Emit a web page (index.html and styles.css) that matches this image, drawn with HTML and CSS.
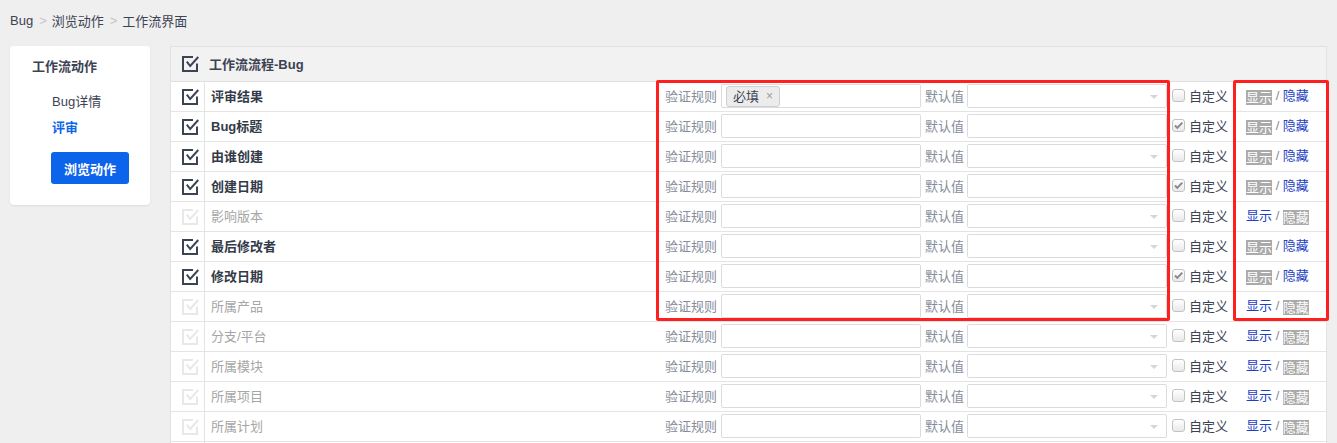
FILE: index.html
```html
<!DOCTYPE html>
<html lang="zh-CN">
<head>
<meta charset="utf-8">
<title>工作流界面</title>
<link rel="stylesheet" href="styles.css">
</head>
<body>
<div class="crumbs"><span>Bug</span><span class="sep">&gt;</span><span>浏览动作</span><span class="sep">&gt;</span><span>工作流界面</span></div>
<div class="main">
  <aside class="side">
    <div class="side-title">工作流动作</div>
    <div class="side-item">Bug详情</div>
    <div class="side-item active">评审</div>
    <button class="btn">浏览动作</button>
  </aside>
  <section class="panel">
    <div class="phead">
      <svg class="ic" width="17" height="16" viewBox="0 0 17 16"><path d="M11 1H1v14h14V7.5" fill="none" stroke="currentColor" stroke-width="2"/><path d="M4.8 5.6l3.4 4.4L16.3 1" fill="none" stroke="currentColor" stroke-width="2"/></svg>
      <span class="ptitle">工作流流程-Bug</span>
    </div>

    <div class="row">
      <div class="ck"><svg class="ic" width="17" height="16" viewBox="0 0 17 16"><path d="M11 1H1v14h14V7.5" fill="none" stroke="currentColor" stroke-width="2"/><path d="M4.8 5.6l3.4 4.4L16.3 1" fill="none" stroke="currentColor" stroke-width="2"/></svg></div>
      <div class="name">评审结果</div>
      <div class="lbl">验证规则</div>
      <div class="field"><span class="tag">必填<i>×</i></span></div>
      <div class="lbl2">默认值</div>
      <div class="field sel"></div>
      <div class="cust"><span class="cb"></span>自定义</div>
      <div class="acts"><span class="cur">显示</span> / <a class="lnk">隐藏</a></div>
    </div>

    <div class="row">
      <div class="ck"><svg class="ic" width="17" height="16" viewBox="0 0 17 16"><path d="M11 1H1v14h14V7.5" fill="none" stroke="currentColor" stroke-width="2"/><path d="M4.8 5.6l3.4 4.4L16.3 1" fill="none" stroke="currentColor" stroke-width="2"/></svg></div>
      <div class="name">Bug标题</div>
      <div class="lbl">验证规则</div>
      <div class="field"></div>
      <div class="lbl2">默认值</div>
      <div class="field"></div>
      <div class="cust"><span class="cb checked"><svg width="11" height="11" viewBox="0 0 11 11"><path d="M2 5.5l2.3 2.4L9.3 2.6" fill="none" stroke="#8a8a8a" stroke-width="2"/></svg></span>自定义</div>
      <div class="acts"><span class="cur">显示</span> / <a class="lnk">隐藏</a></div>
    </div>

    <div class="row">
      <div class="ck"><svg class="ic" width="17" height="16" viewBox="0 0 17 16"><path d="M11 1H1v14h14V7.5" fill="none" stroke="currentColor" stroke-width="2"/><path d="M4.8 5.6l3.4 4.4L16.3 1" fill="none" stroke="currentColor" stroke-width="2"/></svg></div>
      <div class="name">由谁创建</div>
      <div class="lbl">验证规则</div>
      <div class="field"></div>
      <div class="lbl2">默认值</div>
      <div class="field sel"></div>
      <div class="cust"><span class="cb"></span>自定义</div>
      <div class="acts"><span class="cur">显示</span> / <a class="lnk">隐藏</a></div>
    </div>

    <div class="row">
      <div class="ck"><svg class="ic" width="17" height="16" viewBox="0 0 17 16"><path d="M11 1H1v14h14V7.5" fill="none" stroke="currentColor" stroke-width="2"/><path d="M4.8 5.6l3.4 4.4L16.3 1" fill="none" stroke="currentColor" stroke-width="2"/></svg></div>
      <div class="name">创建日期</div>
      <div class="lbl">验证规则</div>
      <div class="field"></div>
      <div class="lbl2">默认值</div>
      <div class="field"></div>
      <div class="cust"><span class="cb checked"><svg width="11" height="11" viewBox="0 0 11 11"><path d="M2 5.5l2.3 2.4L9.3 2.6" fill="none" stroke="#8a8a8a" stroke-width="2"/></svg></span>自定义</div>
      <div class="acts"><span class="cur">显示</span> / <a class="lnk">隐藏</a></div>
    </div>

    <div class="row off">
      <div class="ck"><svg class="ic" width="17" height="16" viewBox="0 0 17 16"><path d="M11 1H1v14h14V7.5" fill="none" stroke="currentColor" stroke-width="2"/><path d="M4.8 5.6l3.4 4.4L16.3 1" fill="none" stroke="currentColor" stroke-width="2"/></svg></div>
      <div class="name">影响版本</div>
      <div class="lbl">验证规则</div>
      <div class="field"></div>
      <div class="lbl2">默认值</div>
      <div class="field sel"></div>
      <div class="cust"><span class="cb"></span>自定义</div>
      <div class="acts"><a class="lnk">显示</a> / <span class="cur">隐藏</span></div>
    </div>

    <div class="row">
      <div class="ck"><svg class="ic" width="17" height="16" viewBox="0 0 17 16"><path d="M11 1H1v14h14V7.5" fill="none" stroke="currentColor" stroke-width="2"/><path d="M4.8 5.6l3.4 4.4L16.3 1" fill="none" stroke="currentColor" stroke-width="2"/></svg></div>
      <div class="name">最后修改者</div>
      <div class="lbl">验证规则</div>
      <div class="field"></div>
      <div class="lbl2">默认值</div>
      <div class="field sel"></div>
      <div class="cust"><span class="cb"></span>自定义</div>
      <div class="acts"><span class="cur">显示</span> / <a class="lnk">隐藏</a></div>
    </div>

    <div class="row">
      <div class="ck"><svg class="ic" width="17" height="16" viewBox="0 0 17 16"><path d="M11 1H1v14h14V7.5" fill="none" stroke="currentColor" stroke-width="2"/><path d="M4.8 5.6l3.4 4.4L16.3 1" fill="none" stroke="currentColor" stroke-width="2"/></svg></div>
      <div class="name">修改日期</div>
      <div class="lbl">验证规则</div>
      <div class="field"></div>
      <div class="lbl2">默认值</div>
      <div class="field"></div>
      <div class="cust"><span class="cb checked"><svg width="11" height="11" viewBox="0 0 11 11"><path d="M2 5.5l2.3 2.4L9.3 2.6" fill="none" stroke="#8a8a8a" stroke-width="2"/></svg></span>自定义</div>
      <div class="acts"><span class="cur">显示</span> / <a class="lnk">隐藏</a></div>
    </div>

    <div class="row off">
      <div class="ck"><svg class="ic" width="17" height="16" viewBox="0 0 17 16"><path d="M11 1H1v14h14V7.5" fill="none" stroke="currentColor" stroke-width="2"/><path d="M4.8 5.6l3.4 4.4L16.3 1" fill="none" stroke="currentColor" stroke-width="2"/></svg></div>
      <div class="name">所属产品</div>
      <div class="lbl">验证规则</div>
      <div class="field"></div>
      <div class="lbl2">默认值</div>
      <div class="field sel"></div>
      <div class="cust"><span class="cb"></span>自定义</div>
      <div class="acts"><a class="lnk">显示</a> / <span class="cur">隐藏</span></div>
    </div>

    <div class="row off">
      <div class="ck"><svg class="ic" width="17" height="16" viewBox="0 0 17 16"><path d="M11 1H1v14h14V7.5" fill="none" stroke="currentColor" stroke-width="2"/><path d="M4.8 5.6l3.4 4.4L16.3 1" fill="none" stroke="currentColor" stroke-width="2"/></svg></div>
      <div class="name">分支/平台</div>
      <div class="lbl">验证规则</div>
      <div class="field"></div>
      <div class="lbl2">默认值</div>
      <div class="field sel"></div>
      <div class="cust"><span class="cb"></span>自定义</div>
      <div class="acts"><a class="lnk">显示</a> / <span class="cur">隐藏</span></div>
    </div>

    <div class="row off">
      <div class="ck"><svg class="ic" width="17" height="16" viewBox="0 0 17 16"><path d="M11 1H1v14h14V7.5" fill="none" stroke="currentColor" stroke-width="2"/><path d="M4.8 5.6l3.4 4.4L16.3 1" fill="none" stroke="currentColor" stroke-width="2"/></svg></div>
      <div class="name">所属模块</div>
      <div class="lbl">验证规则</div>
      <div class="field"></div>
      <div class="lbl2">默认值</div>
      <div class="field sel"></div>
      <div class="cust"><span class="cb"></span>自定义</div>
      <div class="acts"><a class="lnk">显示</a> / <span class="cur">隐藏</span></div>
    </div>

    <div class="row off">
      <div class="ck"><svg class="ic" width="17" height="16" viewBox="0 0 17 16"><path d="M11 1H1v14h14V7.5" fill="none" stroke="currentColor" stroke-width="2"/><path d="M4.8 5.6l3.4 4.4L16.3 1" fill="none" stroke="currentColor" stroke-width="2"/></svg></div>
      <div class="name">所属项目</div>
      <div class="lbl">验证规则</div>
      <div class="field"></div>
      <div class="lbl2">默认值</div>
      <div class="field sel"></div>
      <div class="cust"><span class="cb"></span>自定义</div>
      <div class="acts"><a class="lnk">显示</a> / <span class="cur">隐藏</span></div>
    </div>

    <div class="row off">
      <div class="ck"><svg class="ic" width="17" height="16" viewBox="0 0 17 16"><path d="M11 1H1v14h14V7.5" fill="none" stroke="currentColor" stroke-width="2"/><path d="M4.8 5.6l3.4 4.4L16.3 1" fill="none" stroke="currentColor" stroke-width="2"/></svg></div>
      <div class="name">所属计划</div>
      <div class="lbl">验证规则</div>
      <div class="field"></div>
      <div class="lbl2">默认值</div>
      <div class="field sel"></div>
      <div class="cust"><span class="cb"></span>自定义</div>
      <div class="acts"><a class="lnk">显示</a> / <span class="cur">隐藏</span></div>
    </div>

    <div class="row">
      <div class="ck"></div>
    </div>
  </section>
</div>
<div class="mark mark-a"></div>
<div class="mark mark-b"></div>
</body>
</html>
```

FILE: styles.css
```css
html, body {
  margin: 0;
  padding: 0;
}
body {
  background: #efefef;
  font-family: "Liberation Sans", "Noto Sans CJK SC", sans-serif;
  font-size: 13px;
  color: #3c4353;
  position: relative;
}
.crumbs {
  height: 42px;
  box-sizing: border-box;
  padding: 0 0 2px 10px;
  display: flex;
  align-items: center;
  color: #3c4353;
}
.crumbs .sep {
  color: #c4c4c4;
  margin: 0 5px 0 6px;
}
.main {
  display: flex;
  align-items: flex-start;
  padding: 4px 10px 0 10px;
  gap: 20px;
}
.side {
  width: 140px;
  flex: none;
  box-sizing: border-box;
  background: #fff;
  border-radius: 4px;
  box-shadow: 0 1px 2px rgba(0, 0, 0, 0.08);
  padding: 11px 0 21px 0;
}
.side-title {
  line-height: 20px;
  padding-left: 22px;
  font-weight: bold;
  margin-bottom: 12px;
}
.side-item {
  line-height: 26px;
  padding-left: 42px;
}
.side-item:first-of-type {
  padding-top: 1px;
}
.side-item.active {
  color: #0c64eb;
  font-weight: bold;
}
.btn {
  display: block;
  margin: 11px 0 0 41px;
  width: 78px;
  height: 32px;
  border: none;
  border-radius: 3px;
  background: #0c64eb;
  color: #fff;
  font-family: inherit;
  font-size: 13px;
  font-weight: bold;
  padding: 0;
}
.panel {
  flex: 1;
  background: #fff;
  border: 1px solid #e2e2e2;
  min-width: 0;
}
.phead {
  height: 34px;
  background: #f2f2f2;
  border-bottom: 1px solid #e0e0e0;
  display: flex;
  align-items: center;
  padding-left: 11px;
}
.ic {
  display: block;
  color: #3c4353;
  flex: none;
}
.ptitle {
  margin-left: 10px;
  font-weight: bold;
  padding-bottom: 2px;
}
.row {
  display: flex;
  align-items: center;
  height: 29px;
  border-bottom: 1px solid #e4e4e4;
}
.ck {
  width: 22px;
  height: 100%;
  padding-left: 11px;
  border-right: 1px solid #e4e4e4;
  display: flex;
  align-items: center;
  flex: none;
}
.name,
.lbl,
.lbl2,
.cust,
.acts {
  padding-bottom: 3px;
}
.name {
  flex: 1;
  padding-left: 6px;
  font-weight: bold;
  color: #333a48;
}
.off .ic {
  color: #e8e8e8;
}
.off .name {
  font-weight: normal;
  color: #a6a6a6;
}
.lbl {
  width: 56px;
  padding-right: 4px;
  text-align: right;
  color: #878d9a;
  flex: none;
}
.lbl2 {
  width: 39px;
  padding-left: 4px;
  padding-right: 3px;
  color: #878d9a;
  flex: none;
}
.field {
  width: 200px;
  height: 24px;
  box-sizing: border-box;
  border: 1px solid #dcdcdc;
  border-radius: 2px;
  background: #fff;
  flex: none;
  display: flex;
  align-items: center;
  position: relative;
  margin-bottom: 1px;
}
.sel::after {
  content: "";
  position: absolute;
  right: 8px;
  top: 10px;
  border-left: 4px solid transparent;
  border-right: 4px solid transparent;
  border-top: 4px solid #d6d6d6;
}
.tag {
  display: inline-flex;
  align-items: center;
  height: 18px;
  margin-left: 4px;
  padding: 0 6px 1px 6px;
  background: #ececec;
  border: 1px solid #cfcfcf;
  border-radius: 3px;
  color: #3c4353;
}
.tag i {
  font-style: normal;
  color: #9a9a9a;
  margin-left: 7px;
  font-size: 12px;
}
.cust {
  width: 62px;
  padding-left: 5px;
  display: flex;
  align-items: center;
  flex: none;
  color: #3c4353;
}
.cb {
  width: 13px;
  height: 13px;
  box-sizing: border-box;
  border: 1px solid #c2c2c2;
  border-radius: 3px;
  background: linear-gradient(#ffffff, #e9e9e9);
  margin-right: 4px;
  display: flex;
  align-items: center;
  justify-content: center;
  flex: none;
}
.cb svg {
  display: block;
}
.acts {
  width: 92px;
  box-sizing: border-box;
  padding-left: 12px;
  flex: none;
  color: #8a8a8a;
  white-space: nowrap;
}
.lnk {
  color: #1f3fc4;
}
.cur {
  display: inline-block;
  line-height: 15px;
  height: 15px;
  background: #aaaaaa;
  color: #fff;
  vertical-align: middle;
}
.mark {
  position: absolute;
  box-sizing: border-box;
  border: 3px solid #ff1f1f;
  border-radius: 2px;
  pointer-events: none;
}
.mark-a {
  left: 656px;
  top: 80px;
  width: 514px;
  height: 241px;
}
.mark-b {
  left: 1233px;
  top: 80px;
  width: 96px;
  height: 241px;
}
```
